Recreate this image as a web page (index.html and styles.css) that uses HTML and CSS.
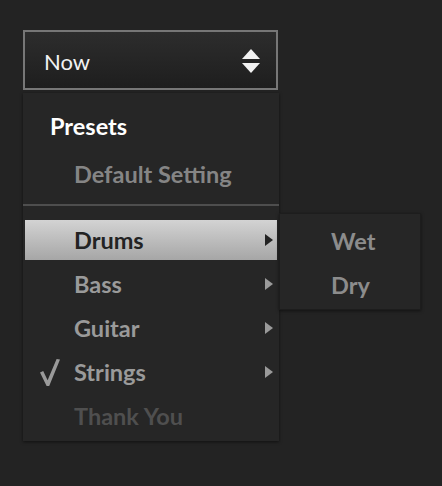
FILE: index.html
```html
<!DOCTYPE html>
<html>
<head>
<meta charset="utf-8">
<link rel="stylesheet" href="styles.css">
</head>
<body>
<div class="page">
  <div class="select">
    <span class="select-value">Now</span>
    <svg class="select-icon" width="18" height="24" viewBox="0 0 18 24">
      <polygon points="9,0 18,10 0,10" fill="#f2f2f2"/>
      <polygon points="0,14 18,14 9,24" fill="#f2f2f2"/>
    </svg>
  </div>
  <div class="menu">
    <div class="menu-header">Presets</div>
    <div class="menu-default">Default Setting</div>
    <div class="separator"></div>
    <div class="items">
      <div class="item">
        <div class="row active">
          <span class="check"></span>
          <span class="label">Drums</span>
          <span class="arrow"></span>
        </div>
        <div class="submenu">
          <div class="sub-item">Wet</div>
          <div class="sub-item">Dry</div>
        </div>
      </div>
      <div class="item">
        <div class="row">
          <span class="check"></span>
          <span class="label">Bass</span>
          <span class="arrow"></span>
        </div>
      </div>
      <div class="item">
        <div class="row">
          <span class="check"></span>
          <span class="label">Guitar</span>
          <span class="arrow"></span>
        </div>
      </div>
      <div class="item">
        <div class="row">
          <span class="check">
            <svg width="20" height="27" viewBox="0 0 20 27">
              <polygon points="0,13.5 3.2,12 7.6,21.2 16.6,0 20,0.6 9.2,27 6.6,27" fill="#9a9a9a"/>
            </svg>
          </span>
          <span class="label">Strings</span>
          <span class="arrow"></span>
        </div>
      </div>
      <div class="item">
        <div class="row disabled">
          <span class="check"></span>
          <span class="label">Thank You</span>
        </div>
      </div>
    </div>
  </div>
</div>
</body>
</html>
```
FILE: styles.css
```css
html, body {
  margin: 0;
  padding: 0;
  background: #232323;
}

body {
  font-family: "Lato", "Liberation Sans", sans-serif;
  width: 442px;
  height: 486px;
  overflow: hidden;
}

.page {
  padding: 30px 0 0 23px;
}

.select {
  box-sizing: border-box;
  width: 255px;
  height: 60px;
  border: 2px solid #777777;
  background: linear-gradient(#2d2d2d, #1e1e1e);
  display: flex;
  align-items: center;
  justify-content: space-between;
  padding: 0 16px 0 19px;
}

.select-value {
  color: #f2f2f2;
  font-size: 22px;
  font-weight: 400;
  margin-top: 2px;
}

.select-icon {
  display: block;
  margin-top: 2px;
}

.menu {
  position: relative;
  width: 256px;
  margin-top: 3px;
  background: #262626;
  box-shadow: 0 1px 3px rgba(0, 0, 0, 0.55);
  padding: 11px 0 3px;
  font-weight: 700;
  font-size: 23.5px;
}

.menu-header {
  height: 44px;
  line-height: 44px;
  padding-left: 27px;
  color: #ffffff;
}

.menu-default {
  margin-top: 4px;
  height: 44px;
  line-height: 44px;
  padding-left: 51px;
  color: #858585;
}

.separator {
  margin-top: 8px;
  height: 2px;
  background: #4e4e4e;
}

.items {
  margin-top: 12px;
}

.item {
  position: relative;
  height: 44px;
  padding: 2px;
  box-sizing: border-box;
}

.row {
  height: 40px;
  display: flex;
  align-items: center;
  padding: 0 4px 0 15px;
  color: #9a9a9a;
}

.row.active {
  background: linear-gradient(#d3d3d3, #a6a6a6);
  color: #232323;
}

.row.disabled {
  color: #4f4f4f;
}

.check {
  width: 34px;
  flex: none;
  display: flex;
  align-items: center;
}

.check svg {
  display: block;
}

.label {
  flex: 1;
  line-height: 40px;
}

.arrow {
  width: 0;
  height: 0;
  border-top: 6px solid transparent;
  border-bottom: 6px solid transparent;
  border-left: 8px solid #9a9a9a;
}

.row.active .arrow {
  border-left-color: #232323;
}

.submenu {
  position: absolute;
  left: 100%;
  top: -5px;
  width: 142px;
  height: 97px;
  box-sizing: border-box;
  padding: 5px 0 4px 51px;
  background: #262626;
  border: 1px solid #1d1d1d;
  box-shadow: 0 1px 3px rgba(0, 0, 0, 0.5);
  z-index: 2;
}

.sub-item {
  height: 44px;
  line-height: 44px;
  color: #8c8c8c;
}
```
